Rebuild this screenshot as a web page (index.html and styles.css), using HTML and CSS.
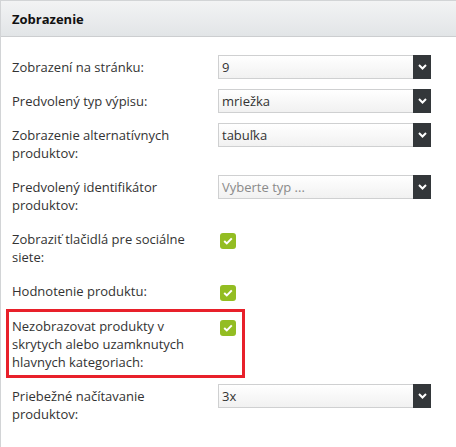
FILE: index.html
```html
<!DOCTYPE html>
<html lang="sk">
<head>
<meta charset="utf-8">
<title>Zobrazenie</title>
<link rel="stylesheet" href="styles.css">
</head>
<body>
<div class="panel">
  <div class="panel-head">Zobrazenie</div>
  <div class="panel-body">
    <div class="row">
      <div class="label">Zobrazení na stránku:</div>
      <div class="control"><div class="select"><span class="val">9</span><span class="btn"><svg width="9" height="6" viewBox="0 0 9 6"><path d="M1 1 L4.5 4.5 L8 1" fill="none" stroke="#fff" stroke-width="2"/></svg></span></div></div>
    </div>
    <div class="row">
      <div class="label">Predvolený typ výpisu:</div>
      <div class="control"><div class="select"><span class="val">mriežka</span><span class="btn"><svg width="9" height="6" viewBox="0 0 9 6"><path d="M1 1 L4.5 4.5 L8 1" fill="none" stroke="#fff" stroke-width="2"/></svg></span></div></div>
    </div>
    <div class="row">
      <div class="label">Zobrazenie alternatívnych<br>produktov:</div>
      <div class="control"><div class="select"><span class="val">tabuľka</span><span class="btn"><svg width="9" height="6" viewBox="0 0 9 6"><path d="M1 1 L4.5 4.5 L8 1" fill="none" stroke="#fff" stroke-width="2"/></svg></span></div></div>
    </div>
    <div class="row">
      <div class="label">Predvolený identifikátor<br>produktov:</div>
      <div class="control"><div class="select"><span class="val placeholder">Vyberte typ ...</span><span class="btn"><svg width="9" height="6" viewBox="0 0 9 6"><path d="M1 1 L4.5 4.5 L8 1" fill="none" stroke="#fff" stroke-width="2"/></svg></span></div></div>
    </div>
    <div class="row">
      <div class="label">Zobraziť tlačidlá pre sociálne<br>siete:</div>
      <div class="control check-cell"><span class="check"><svg width="10" height="8" viewBox="0 0 10 8"><path d="M1.2 4 L3.8 6.4 L8.8 1.4" fill="none" stroke="#fff" stroke-width="2"/></svg></span></div>
    </div>
    <div class="row">
      <div class="label">Hodnotenie produktu:</div>
      <div class="control check-cell"><span class="check"><svg width="10" height="8" viewBox="0 0 10 8"><path d="M1.2 4 L3.8 6.4 L8.8 1.4" fill="none" stroke="#fff" stroke-width="2"/></svg></span></div>
    </div>
    <div class="row highlighted">
      <div class="label">Nezobrazovat produkty v<br>skrytych alebo uzamknutych<br>hlavnych kategoriach:</div>
      <div class="control check-cell"><span class="check"><svg width="10" height="8" viewBox="0 0 10 8"><path d="M1.2 4 L3.8 6.4 L8.8 1.4" fill="none" stroke="#fff" stroke-width="2"/></svg></span></div>
    </div>
    <div class="row">
      <div class="label">Priebežné načítavanie<br>produktov:</div>
      <div class="control"><div class="select"><span class="val">3x</span><span class="btn"><svg width="9" height="6" viewBox="0 0 9 6"><path d="M1 1 L4.5 4.5 L8 1" fill="none" stroke="#fff" stroke-width="2"/></svg></span></div></div>
    </div>
  </div>
</div>
</body>
</html>
```

FILE: styles.css
```css
html, body {
  margin: 0;
  padding: 0;
  background: #fff;
}
body {
  font-family: "Open Sans", "DejaVu Sans", sans-serif;
  font-size: 13px;
  color: #333;
}
.panel {
  border-left: 1px solid #d2d4d6;
  border-top: 1px solid #d2d4d6;
  height: 446px;
}
.panel-head {
  height: 36px;
  box-sizing: border-box;
  padding: 9px 11px 0;
  font-weight: bold;
  font-size: 13px;
  line-height: 18px;
  color: #111;
  background: linear-gradient(#f2f3f4, #e2e5e7);
  border-bottom: 1px solid #ccced0;
}
.panel-body {
  padding: 18px 0 0 11px;
  display: flex;
  flex-direction: column;
  gap: 10px;
}
.row {
  display: flex;
  align-items: flex-start;
  position: relative;
}
.label {
  width: 206px;
  padding: 3px 0;
  line-height: 18px;
  color: #333;
}
.control {
  width: 213px;
}
.select {
  display: flex;
  height: 24px;
  box-sizing: border-box;
  border: 1px solid #cfd0d1;
  border-right: none;
  background: linear-gradient(#ffffff, #f1f1f1);
}
.val {
  flex: 1;
  padding-left: 3px;
  line-height: 22px;
  color: #333;
}
.val.placeholder {
  color: #8a8a8a;
}
.btn {
  width: 18px;
  margin: -1px 0;
  background: #33373a;
  display: flex;
  align-items: center;
  justify-content: center;
}
.check-cell {
  padding-top: 6px;
  padding-left: 2px;
}
.check {
  width: 16px;
  height: 16px;
  border-radius: 3px;
  background: #93bd22;
  display: flex;
  align-items: center;
  justify-content: center;
}
.highlighted {
  margin-top: 1px;
}
.highlighted::after {
  content: "";
  position: absolute;
  left: -6px;
  top: -5px;
  width: 233px;
  height: 63px;
  border: 3px solid #e8202a;
}
```
